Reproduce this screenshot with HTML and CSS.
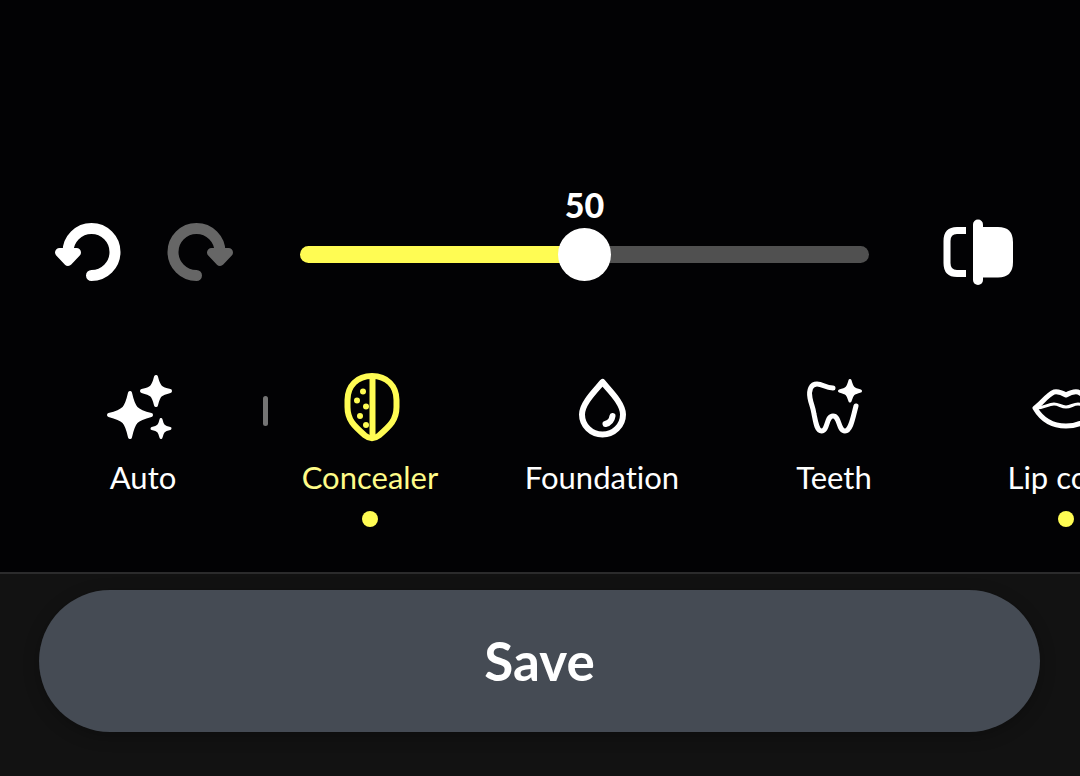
FILE: index.html
```html
<!DOCTYPE html>
<html lang="en">
<head>
<meta charset="utf-8">
<meta name="viewport" content="width=device-width, initial-scale=1">
<title>Retouch</title>
<link rel="stylesheet" href="styles.css">
</head>
<body>
<main class="editor">
  <section class="controls" aria-label="Adjustment">
    <button class="icon-button" type="button" aria-label="Undo">
      <svg width="66" height="64" viewBox="55 221 66 64">
        <path class="turn" d="M91.500 275.500A23.500 23.500 0 1 0 68 252"/>
        <path class="head" d="M59.500 252.500H76.500L68 261.500Z"/>
      </svg>
    </button>
    <button class="icon-button redo" type="button" aria-label="Redo" disabled>
      <svg width="66" height="64" viewBox="167 221 66 64">
        <path class="turn" d="M196.500 275.500A23.500 23.500 0 1 1 220 252"/>
        <path class="head" d="M211.500 252.500H228.500L220 261.500Z"/>
      </svg>
    </button>
    <div class="slider">
      <output class="slider-value" for="amount">50</output>
      <input class="slider-input" id="amount" type="range" min="0" max="100" value="50" aria-label="Concealer amount">
    </div>
    <button class="icon-button" type="button" aria-label="Compare">
      <svg width="70" height="66" viewBox="943 220 70 66">
        <path class="frame" d="M966 231.500H957Q947 231.500 947 242V264Q947 274.500 957 274.500H966"/>
        <path class="solid" d="M978 228H998Q1013 228 1013 243V263Q1013 278.500 998 278.500H978Z"/>
        <rect class="solid" x="973" y="220.500" width="10" height="65.500" rx="5"/>
      </svg>
    </button>
  </section>

  <nav class="tools" aria-label="Tools">
    <button class="tool tool-auto" type="button">
      <svg class="tool-icon" width="80" height="72" viewBox="103 371 80 72">
        <path class="star" d="M130 393C133.500 408.500 135.500 411 151 415C135.500 419 133.500 421.500 130 437C126.500 421.500 124.500 419 109 415C124.500 411 126.500 408.500 130 393Z"/>
        <path class="star" d="M156 377C158.500 387 160 388.500 170 391C160 393.500 158.500 395 156 405C153.500 395 152 393.500 142 391C152 388.500 153.500 387 156 377Z"/>
        <path class="star small" d="M161 419.500C162.500 426 163.500 427 170 428.500C163.500 430 162.500 431 161 437.500C159.500 431 158.500 430 152 428.500C158.500 427 159.500 426 161 419.500Z"/>
      </svg>
      <span class="tool-name">Auto</span>
    </button>
    <span class="divider"></span>
    <button class="tool active marked" type="button" aria-pressed="true">
      <svg class="tool-icon" width="80" height="72" viewBox="330 371 80 72">
        <path class="line" d="M372 376C357 376 347.500 386 347.500 400V407C347.500 420 354 426 365 435.500Q372 441 379 435.500C390 426 396.500 420 396.500 407V400C396.500 386 387 376 372 376Z"/>
        <path class="line" d="M372.500 376V438"/>
        <g class="solid"><circle cx="363" cy="391.500" r="3"/><circle cx="357" cy="400.500" r="3"/><circle cx="366" cy="406.500" r="3"/><circle cx="360" cy="416" r="3"/><circle cx="366" cy="425" r="3"/></g>
      </svg>
      <span class="tool-name">Concealer</span>
    </button>
    <button class="tool" type="button">
      <svg class="tool-icon" width="80" height="72" viewBox="562 371 80 72">
        <path class="line" d="M602.500 382C596 390 582 403 582 414.500A20.500 20 0 0 0 623 414.500C623 403 609 390 602.500 382Z"/>
        <path class="glint" d="M612.500 416Q611.500 422.500 605.500 424"/>
      </svg>
      <span class="tool-name">Foundation</span>
    </button>
    <button class="tool" type="button">
      <svg class="tool-icon" width="80" height="72" viewBox="794 371 80 72">
        <path class="tooth" d="M833 388C825 388 823 384 817 384C811 384 808.500 390 810 398C811 404 813 407 814 414C816 424 817 431 821.500 431C828 431 826 416 833 416C840 416 838 431 845 431C851 431 853 417 856 406"/>
        <path class="star small" d="M850 380.500C852 388 853 389 860.500 391C853 393 852 394 850 401C848 394 847 393 839.500 391C847 389 848 388 850 380.500Z"/>
      </svg>
      <span class="tool-name">Teeth</span>
    </button>
    <button class="tool marked" type="button">
      <svg class="tool-icon" width="80" height="72" viewBox="1026 371 80 72">
        <path class="lips" d="M1035 408C1041 404 1047 395 1054 392Q1059 391 1066 395Q1073 391 1078 392C1085 395 1091 404 1097 408C1090 420 1080 426 1066 426C1052 426 1042 420 1035 408Z"/>
        <path class="mouth" d="M1036 408C1044 408 1048 404 1054 404C1059 404 1061 407 1066 407C1071 407 1073 404 1078 404C1084 404 1088 408 1096 408"/>
      </svg>
      <span class="tool-name">Lip color</span>
    </button>
  </nav>
</main>
<footer class="footer">
  <button class="save" type="button">Save</button>
</footer>
</body>
</html>
```
FILE: styles.css
```css
* { box-sizing: border-box; }

body {
  margin: 0;
  min-height: 100vh;
  display: flex;
  flex-direction: column;
  background: #020204;
  color: #fff;
  font-family: Lato, "Liberation Sans", sans-serif;
  font-variant-ligatures: none;
}

button {
  border: 0;
  padding: 0;
  background: none;
  color: inherit;
  font: inherit;
  font-variant-ligatures: none;
  cursor: pointer;
}

svg { display: block; fill: none; stroke: none; }

.editor {
  flex: 1;
  display: flex;
  flex-direction: column;
  justify-content: flex-end;
  overflow: hidden;
}

.controls {
  display: flex;
  align-items: flex-end;
  padding: 0 67px 0 55px;
}

.icon-button { flex: none; }
.redo { margin-left: 46px; color: #666; cursor: default; }
.turn { stroke: currentColor; stroke-width: 11; stroke-linecap: round; }
.head { fill: currentColor; stroke: currentColor; stroke-width: 9; stroke-linejoin: round; }
.frame { stroke: currentColor; stroke-width: 7; }
.solid { fill: currentColor; }

.slider {
  flex: 1;
  min-width: 0;
  display: flex;
  flex-direction: column;
  align-items: center;
  margin: 0 74px 4px 67px;
}

.slider-value {
  font-size: 34px;
  font-weight: 900;
  line-height: 46px;
}

.slider-input {
  appearance: none;
  width: 100%;
  height: 53px;
  margin: 0;
  background: none;
}

.slider-input::-webkit-slider-runnable-track {
  height: 17px;
  border-radius: 9px;
  background: linear-gradient(90deg, #fffc53 45%, #e8e544 50%, #505050 50%);
}

.slider-input::-webkit-slider-thumb {
  appearance: none;
  width: 53px;
  height: 53px;
  margin-top: -18px;
  border-radius: 50%;
  background: #fff;
}

.tools {
  display: flex;
  align-items: flex-start;
  padding: 86px 0 45px 26px;
}

.tool {
  flex: none;
  display: flex;
  flex-direction: column;
  align-items: center;
  width: 232px;
}

.tool-auto { width: 234px; }

.tool-name {
  margin-top: 16px;
  font-size: 31px;
  line-height: 36px;
  white-space: nowrap;
}

.marked::after {
  content: "";
  width: 16px;
  height: 16px;
  margin-top: 16px;
  border-radius: 50%;
  background: #fffc53;
}

.active { color: #fffc53; }
.active .tool-name { color: #fffc88; }

.divider {
  flex: none;
  width: 5px;
  height: 30px;
  margin: 25px -14px 0 3px;
  border-radius: 3px;
  background: #747474;
}

.star { fill: currentColor; stroke: currentColor; stroke-width: 4; stroke-linejoin: round; }
.small { stroke-width: 3; }
.line { stroke: currentColor; stroke-width: 6; stroke-linejoin: round; }
.glint { stroke: currentColor; stroke-width: 6; stroke-linecap: round; }
.tooth { stroke: currentColor; stroke-width: 5; stroke-linecap: round; stroke-linejoin: round; }
.lips { stroke: currentColor; stroke-width: 5; stroke-linejoin: round; }
.mouth { stroke: currentColor; stroke-width: 3; }

.footer {
  padding: 16px 40px 44px 39px;
  border-top: 2px solid #2b2b2c;
  background: #121212;
}

.save {
  display: block;
  width: 100%;
  padding: 41px 24px;
  border-radius: 71px;
  background: #454b54;
  box-shadow: 0 4px 16px rgba(0, 0, 0, 0.25);
  font-size: 53px;
  font-weight: 700;
  line-height: 60px;
}
```
